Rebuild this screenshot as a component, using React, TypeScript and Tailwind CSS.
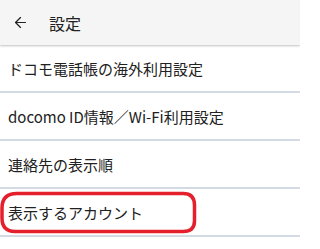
import { ArrowLeft } from "lucide-react"

const items = [
  "ドコモ電話帳の海外利用設定",
  "docomo ID情報／Wi-Fi利用設定",
  "連絡先の表示順",
  "表示するアカウント",
]

export default function App() {
  return (
    <div
      className="relative w-[300px] h-[249px] overflow-hidden bg-white text-[#212121]"
      style={{ fontFamily: '"Noto Sans CJK JP", "Noto Sans", sans-serif' }}
    >
      <header className="relative z-10 h-[45px] flex items-center bg-[#f5f5f5] shadow-[0_1px_2px_rgba(0,0,0,0.25)]">
        <ArrowLeft size={17} strokeWidth={1.75} className="ml-[12px] text-[#222]" />
        <span className="ml-[20px] text-[16px] leading-none">設定</span>
      </header>

      <ul>
        {items.map((label) => (
          <li
            key={label}
            className="h-[48px] flex items-center pl-[8px] border-b-2 border-[#d3dae3] text-[15px] leading-none"
          >
            {label}
          </li>
        ))}
      </ul>

      {/* red annotation around the last row */}
      <svg
        className="absolute left-0 top-[191px] pointer-events-none"
        width="200"
        height="44"
        viewBox="0 0 200 44"
      >
        <path
          d="M17 2.5 H183 Q194.5 2.5 194.5 14 V30 Q194.5 40.5 183 40.5 H15 Q2 40.5 2 27 V17 Q2 2.5 17 2.5 Z"
          fill="none"
          stroke="#e3202b"
          strokeWidth="3.5"
        />
      </svg>
    </div>
  )
}
